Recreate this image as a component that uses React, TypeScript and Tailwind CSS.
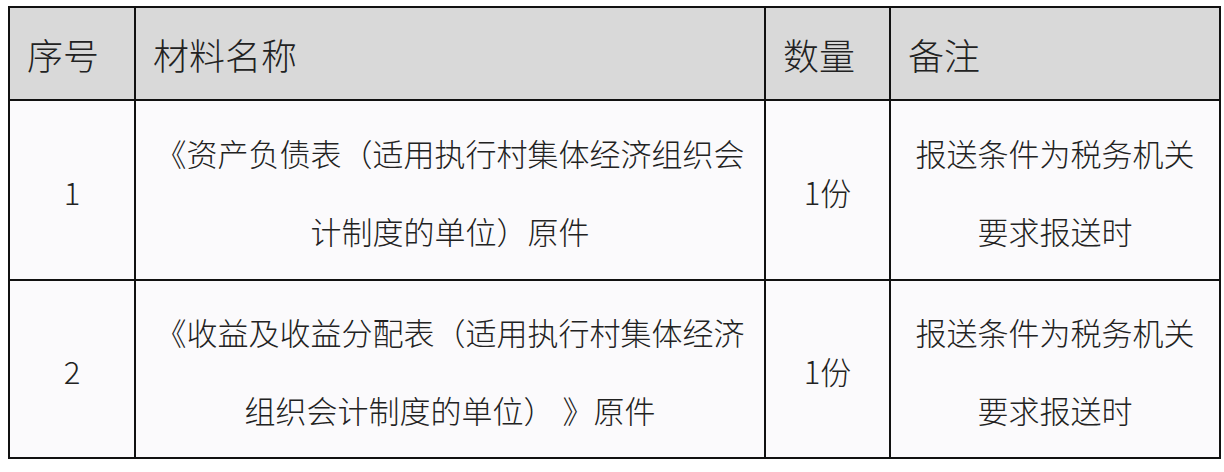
import React from "react";

const font = { fontFamily: '"Noto Sans CJK SC", "Noto Sans", sans-serif' };

function HeaderCell({ children }: { children: React.ReactNode }) {
  return (
    <div className="flex items-center bg-[#d9d9d9] pl-[17px] text-[36px] font-light leading-none text-[#222222]">
      {children}
    </div>
  );
}

function BodyCell({ children }: { children: React.ReactNode }) {
  return (
    <div className="flex items-center justify-center bg-[#fbfafc] pt-[3px] text-center text-[31px] font-light leading-[78px] text-[#222222]">
      <div>{children}</div>
    </div>
  );
}

export default function App() {
  return (
    <div className="h-[472px] w-[1224px] bg-white pl-[8px] pt-[6px]" style={font}>
      <div className="grid w-[1213px] grid-cols-[124px_628px_123px_328px] grid-rows-[91px_178px_176px] gap-[2px] bg-[#111111] p-[2px]">
        <HeaderCell>序号</HeaderCell>
        <HeaderCell>材料名称</HeaderCell>
        <HeaderCell>数量</HeaderCell>
        <HeaderCell>备注</HeaderCell>

        <BodyCell>1</BodyCell>
        <BodyCell>
          《资产负债表（适用执行村集体经济组织会
          <br />
          计制度的单位）原件
        </BodyCell>
        <BodyCell>1份</BodyCell>
        <BodyCell>
          报送条件为税务机关
          <br />
          要求报送时
        </BodyCell>

        <BodyCell>2</BodyCell>
        <BodyCell>
          《收益及收益分配表（适用执行村集体经济
          <br />
          组织会计制度的单位）<span className="inline-block w-[8px]"></span>》原件
        </BodyCell>
        <BodyCell>1份</BodyCell>
        <BodyCell>
          报送条件为税务机关
          <br />
          要求报送时
        </BodyCell>
      </div>
    </div>
  );
}
